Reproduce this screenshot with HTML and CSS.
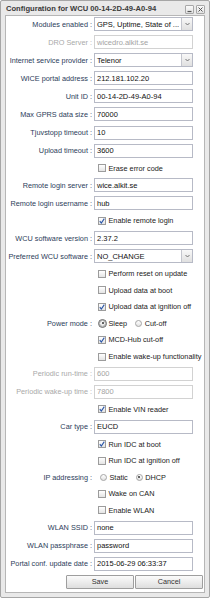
FILE: index.html
```html
<!DOCTYPE html>
<html lang="en">
<head>
    <meta charset="UTF-8">
    <title>Configuration for WCU</title>
    <link rel="stylesheet" href="styles.css">
</head>
<body>
    <div class="win">
        <div class="win-head">
            <span class="win-title">Configuration for WCU 00-14-2D-49-A0-94</span>
            <span class="tools">
                <span class="tool"><svg width="7" height="7" viewBox="0 0 7 7"><path d="M1.5 5.5h4" stroke="#555" stroke-width="1.2"/></svg></span>
                <span class="tool"><svg width="7" height="7" viewBox="0 0 7 7"><path d="M1.5 1.5l4 4M5.5 1.5l-4 4" stroke="#555" stroke-width="1"/></svg></span>
            </span>
        </div>

        <div class="win-body">
            <div class="form">
                <div class="row">
                    <label class="lbl">Modules enabled :</label>
                    <div class="field combo"><span class="val">GPS, Uptime, State of ...</span><span class="trigger"><svg width="5" height="4" viewBox="0 0 5 4"><path d="M0.5 1l2 2 2-2" fill="none" stroke="#666" stroke-width="0.9"/></svg></span></div>
                </div>
                <div class="row">
                    <label class="lbl off">DRO Server :</label>
                    <div class="field off">wicedro.alkit.se</div>
                </div>
                <div class="row">
                    <label class="lbl">Internet service provider :</label>
                    <div class="field combo"><span class="val">Telenor</span><span class="trigger"><svg width="5" height="4" viewBox="0 0 5 4"><path d="M0.5 1l2 2 2-2" fill="none" stroke="#666" stroke-width="0.9"/></svg></span></div>
                </div>
                <div class="row">
                    <label class="lbl">WICE portal address :</label>
                    <div class="field">212.181.102.20</div>
                </div>
                <div class="row">
                    <label class="lbl">Unit ID :</label>
                    <div class="field">00-14-2D-49-A0-94</div>
                </div>
                <div class="row">
                    <label class="lbl">Max GPRS data size :</label>
                    <div class="field">70000</div>
                </div>
                <div class="row">
                    <label class="lbl">Tjuvstopp timeout :</label>
                    <div class="field">10</div>
                </div>
                <div class="row">
                    <label class="lbl">Upload timeout :</label>
                    <div class="field">3600</div>
                </div>

                <div class="row check-row">
                    <div class="opts"><span class="cb"></span>Erase error code</div>
                </div>

                <div class="row">
                    <label class="lbl">Remote login server :</label>
                    <div class="field">wice.alkit.se</div>
                </div>
                <div class="row">
                    <label class="lbl">Remote login username :</label>
                    <div class="field">hub</div>
                </div>

                <div class="row check-row">
                    <div class="opts"><span class="cb on"><svg width="6" height="6" viewBox="0 0 6 6"><path d="M0.8 3.2l1.5 1.8L5.3 0.6" fill="none" stroke="#2a56a8" stroke-width="1.1"/></svg></span>Enable remote login</div>
                </div>

                <div class="row">
                    <label class="lbl">WCU software version :</label>
                    <div class="field">2.37.2</div>
                </div>
                <div class="row">
                    <label class="lbl">Preferred WCU software :</label>
                    <div class="field combo"><span class="val">NO_CHANGE</span><span class="trigger"><svg width="5" height="4" viewBox="0 0 5 4"><path d="M0.5 1l2 2 2-2" fill="none" stroke="#666" stroke-width="0.9"/></svg></span></div>
                </div>

                <div class="row check-row">
                    <div class="opts"><span class="cb"></span>Perform reset on update</div>
                </div>
                <div class="row check-row">
                    <div class="opts"><span class="cb"></span>Upload data at boot</div>
                </div>
                <div class="row check-row">
                    <div class="opts"><span class="cb on"><svg width="6" height="6" viewBox="0 0 6 6"><path d="M0.8 3.2l1.5 1.8L5.3 0.6" fill="none" stroke="#2a56a8" stroke-width="1.1"/></svg></span>Upload data at ignition off</div>
                </div>

                <div class="row check-row">
                    <label class="lbl">Power mode :</label>
                    <div class="opts radios">
                        <span class="rd on focus"></span>Sleep
                        <span class="rd gap"></span>Cut-off
                    </div>
                </div>

                <div class="row check-row">
                    <div class="opts"><span class="cb on"><svg width="6" height="6" viewBox="0 0 6 6"><path d="M0.8 3.2l1.5 1.8L5.3 0.6" fill="none" stroke="#2a56a8" stroke-width="1.1"/></svg></span>MCD-Hub cut-off</div>
                </div>
                <div class="row check-row">
                    <div class="opts"><span class="cb"></span>Enable wake-up functionality</div>
                </div>

                <div class="row">
                    <label class="lbl off">Periodic run-time :</label>
                    <div class="field off">600</div>
                </div>
                <div class="row">
                    <label class="lbl off">Periodic wake-up time :</label>
                    <div class="field off">7800</div>
                </div>

                <div class="row check-row">
                    <div class="opts"><span class="cb on"><svg width="6" height="6" viewBox="0 0 6 6"><path d="M0.8 3.2l1.5 1.8L5.3 0.6" fill="none" stroke="#2a56a8" stroke-width="1.1"/></svg></span>Enable VIN reader</div>
                </div>

                <div class="row">
                    <label class="lbl">Car type :</label>
                    <div class="field">EUCD</div>
                </div>

                <div class="row check-row">
                    <div class="opts"><span class="cb on"><svg width="6" height="6" viewBox="0 0 6 6"><path d="M0.8 3.2l1.5 1.8L5.3 0.6" fill="none" stroke="#2a56a8" stroke-width="1.1"/></svg></span>Run IDC at boot</div>
                </div>
                <div class="row check-row">
                    <div class="opts"><span class="cb"></span>Run IDC at ignition off</div>
                </div>

                <div class="row check-row">
                    <label class="lbl">IP addressing :</label>
                    <div class="opts radios ip">
                        <span class="rd"></span>Static
                        <span class="rd on gap"></span>DHCP
                    </div>
                </div>

                <div class="row check-row">
                    <div class="opts"><span class="cb"></span>Wake on CAN</div>
                </div>
                <div class="row check-row">
                    <div class="opts"><span class="cb"></span>Enable WLAN</div>
                </div>

                <div class="row">
                    <label class="lbl">WLAN SSID :</label>
                    <div class="field">none</div>
                </div>
                <div class="row">
                    <label class="lbl">WLAN passphrase :</label>
                    <div class="field">password</div>
                </div>
                <div class="row">
                    <label class="lbl">Portal conf. update date :</label>
                    <div class="field">2015-06-29 06:33:37</div>
                </div>
            </div>

            <div class="buttons">
                <button class="btn">Save</button>
                <button class="btn">Cancel</button>
            </div>
        </div>
    </div>
</body>
</html>
```

FILE: styles.css
```css
* {
    margin: 0;
    padding: 0;
    box-sizing: border-box;
}

body {
    font-family: 'Liberation Sans', Arial, sans-serif;
    font-size: 7.3px;
    background: #fff;
}

/* window frame */
.win {
    width: 210px;
    height: 598px;
    border: 1px solid #a6a6a6;
    border-radius: 2px;
    background: #e9e9e9;
    padding: 0 4px 4px 4px;
    display: flex;
    flex-direction: column;
}

.win-head {
    height: 14px;
    display: flex;
    align-items: center;
    justify-content: space-between;
    padding-left: 1px;
}

.win-title {
    font-size: 7.6px;
    font-weight: bold;
    color: #3a3a3a;
    white-space: nowrap;
}

.tools {
    display: flex;
    gap: 2px;
    margin-top: 2px;
}

.tool {
    width: 9px;
    height: 9px;
    border: 1px solid #a8a8a8;
    border-radius: 1px;
    background: linear-gradient(#fafafa, #e2e2e2);
    display: flex;
    align-items: center;
    justify-content: center;
}

.win-body {
    flex: 1;
    background: #fff;
    border: 1px solid #b6b6b6;
    padding-top: 1px;
    display: flex;
    flex-direction: column;
}

/* form rows */
.row {
    display: grid;
    grid-template-columns: 86px 99px;
    column-gap: 2px;
    align-items: center;
    height: 14px;
    margin-bottom: 4.1px;
}

.check-row {
    height: 12.5px;
}

.lbl {
    grid-column: 1;
    text-align: right;
    white-space: nowrap;
    color: #2c3d5a;
}

.lbl.off {
    color: #a9a9a9;
}

.field {
    grid-column: 2;
    height: 14px;
    border: 1px solid #b7bac6;
    padding: 0 2px;
    display: flex;
    align-items: center;
    font-size: 7.5px;
    color: #111;
    white-space: nowrap;
    overflow: hidden;
}

.field.off {
    color: #a3a3a3;
    border-color: #d2d2d2;
}

.combo {
    padding-right: 0;
}

.combo .val {
    flex: 1;
}

.trigger {
    width: 11px;
    height: 100%;
    border-left: 1px solid #c4c6ce;
    background: linear-gradient(#f8f8f8, #e0e0e0);
    display: flex;
    align-items: center;
    justify-content: center;
}

/* checkboxes and radios */
.opts {
    grid-column: 2;
    display: flex;
    align-items: center;
    padding-left: 4px;
    color: #222;
    white-space: nowrap;
}

.cb {
    flex-shrink: 0;
    width: 8px;
    height: 8px;
    margin-right: 2.5px;
    border: 1px solid #9c9c9c;
    background: linear-gradient(#ffffff, #e4e4e4);
    display: flex;
    align-items: center;
    justify-content: center;
}

.radios {
    padding-left: 5px;
}

.radios.ip {
    padding-left: 6px;
}

.rd {
    flex-shrink: 0;
    width: 7px;
    height: 7px;
    border-radius: 50%;
    border: 1px solid #a5a5a5;
    background: linear-gradient(#ffffff, #e2e2e2);
    margin-right: 2.5px;
    position: relative;
}

.rd.gap {
    margin-left: 8px;
}

.rd.on::after {
    content: '';
    position: absolute;
    left: 1.5px;
    top: 1.5px;
    width: 2px;
    height: 2px;
    border-radius: 50%;
    background: #333;
}

.rd.focus {
    outline: 1px solid #6a6a6a;
    outline-offset: 0.5px;
}

/* footer buttons */
.buttons {
    display: flex;
    justify-content: flex-end;
    gap: 1px;
    padding-right: 1px;
    margin-top: -0.5px;
}

.btn {
    width: 68px;
    height: 14.5px;
    border: 1px solid #9e9e9e;
    border-radius: 1px;
    background: linear-gradient(#fbfbfb, #dedede);
    font-family: 'Liberation Sans', Arial, sans-serif;
    font-size: 7.3px;
    color: #333;
}
```
